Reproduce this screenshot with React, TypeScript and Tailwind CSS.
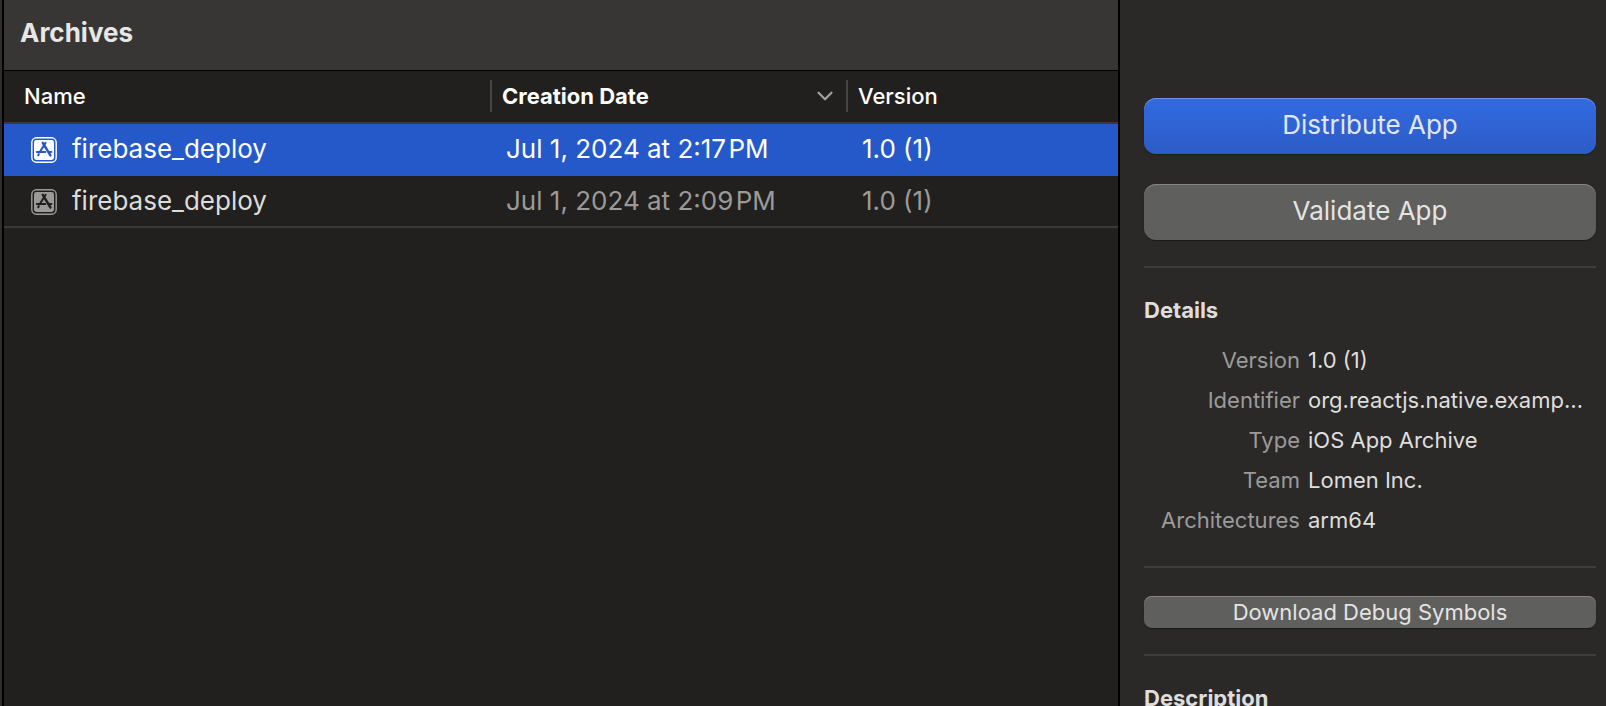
import { ChevronDown } from 'lucide-react'
import clsx from 'clsx'

interface Archive {
  id: number
  name: string
  date: string
  version: string
}

const ARCHIVES: Archive[] = [
  { id: 1, name: 'firebase_deploy', date: 'Jul 1, 2024 at 2:17\u200aPM', version: '1.0 (1)' },
  { id: 2, name: 'firebase_deploy', date: 'Jul 1, 2024 at 2:09\u200aPM', version: '1.0 (1)' },
]

const DETAILS = [
  { label: 'Version', value: '1.0 (1)' },
  { label: 'Identifier', value: 'org.reactjs.native.example.firebase-deploy' },
  { label: 'Type', value: 'iOS App Archive' },
  { label: 'Team', value: 'Lomen Inc.' },
  { label: 'Architectures', value: 'arm64' },
]

const SELECTED_ID = 1

function AppIcon({ selected }: { selected: boolean }) {
  return (
    <svg
      viewBox="0 0 26 26"
      aria-hidden="true"
      className={clsx('mt-0.5 size-[26px] shrink-0', selected ? 'text-white' : 'text-[#9b9a99]')}
    >
      <rect x="0.8" y="0.8" width="24.4" height="24.4" rx="4.6" fill="none" stroke="currentColor" strokeWidth="1.4" />
      <rect x="3" y="3" width="20" height="20" rx="2.4" fill="currentColor" />
      <g stroke={selected ? '#2558c9' : '#21201e'} strokeWidth="2.1" strokeLinecap="round" fill="none">
        <path d="M14.6 5.8 L9 14.8" />
        <path d="M11.8 5.8 L19.4 18.4" strokeWidth="2.5" />
        <path d="M5.8 15 H14.2" />
        <path d="M18.6 15 H20.4" />
        <path d="M7.8 17.2 L7.2 18.2" />
      </g>
    </svg>
  )
}

function Divider() {
  return <hr className="border-t-2 border-[#3e3d3c]" />
}

export default function App() {
  return (
    <div className="flex h-screen overflow-hidden border-l-2 border-[#2f2e2d] bg-[#21201e] font-['Inter','Liberation_Sans',sans-serif]">
      {/* Archive list */}
      <main className="min-w-0 flex-1 border-x-2 border-black">
        <header className="flex h-[71px] items-center border-b border-black bg-[#373634] px-4 pb-1">
          <h1 className="text-[26px] leading-8 font-bold text-[#e8e7e6]">Archives</h1>
        </header>

        <table className="w-full table-fixed border-separate border-spacing-0 text-left">
          <thead className="text-[22px] leading-8 text-white">
            <tr className="h-[53px]">
              <th scope="col" className="w-[486px] border-b-2 border-[#3a3938] p-0 pb-0.5 pl-5 font-medium">
                Name
              </th>
              <th scope="col" aria-sort="descending" className="w-[356px] border-b-2 border-[#3a3938] p-0 pb-0.5">
                <div className="flex items-center justify-between border-l-2 border-[#464544] pr-2 pl-2.5 font-bold">
                  Creation Date
                  <ChevronDown className="size-[26px] text-[#a3a2a1]" strokeWidth={2} />
                </div>
              </th>
              <th scope="col" className="border-b-2 border-[#3a3938] p-0 pb-0.5">
                <div className="border-l-2 border-[#464544] pl-2.5 font-medium">Version</div>
              </th>
            </tr>
          </thead>
          <tbody className="text-[26px] leading-8">
            {ARCHIVES.map((archive) => {
              const selected = archive.id === SELECTED_ID
              const cell = clsx(
                'p-0 border-b-2',
                selected ? 'border-[#2558c9] text-white' : 'border-[#3a3938] text-[#9b9a99]',
              )
              return (
                <tr key={archive.id} aria-selected={selected} className={clsx('h-[52px]', selected && 'bg-[#2558c9]')}>
                  <td className={cell}>
                    <div className="flex items-center gap-[15px] pl-[27px]">
                      <AppIcon selected={selected} />
                      <span className={selected ? 'text-white' : 'text-[#dddcdb]'}>{archive.name}</span>
                    </div>
                  </td>
                  <td className={clsx(cell, 'pl-4')}>{archive.date}</td>
                  <td className={clsx(cell, 'pl-4')}>{archive.version}</td>
                </tr>
              )
            })}
          </tbody>
        </table>
      </main>

      {/* Inspector */}
      <aside className="w-[486px] shrink-0 bg-[#2a2928] pt-[98px] pr-2.5 pl-6 text-[22px] leading-8 text-[#dfdedd]">
        <div className="flex flex-col gap-[30px] pb-[26px] text-[26px]">
          <button
            type="button"
            className="h-14 rounded-xl bg-linear-to-b from-[#336ae2] to-[#2c5cc6] pb-0.5 text-[#e0e7f8] shadow-[inset_0_1px_0_#6b93ea,0_1px_1px_#00000066]"
          >
            Distribute App
          </button>
          <button
            type="button"
            className="h-14 rounded-xl bg-[#5f5f5d] pb-0.5 text-[#e4e4e3] shadow-[inset_0_1px_0_#868584,0_1px_1px_#00000066]"
          >
            Validate App
          </button>
        </div>

        <Divider />

        <section className="py-[26px]">
          <h2 className="mb-3.5 font-bold">Details</h2>
          <dl className="grid grid-cols-[156px_1fr] gap-x-2 leading-10">
            {DETAILS.map(({ label, value }) => (
              <div key={label} className="contents">
                <dt className="text-right text-[#9c9b9a]">{label}</dt>
                <dd className="truncate pr-3">{value}</dd>
              </div>
            ))}
          </dl>
        </section>

        <Divider />

        <div className="pt-7 pb-[26px]">
          <button
            type="button"
            className="block h-8 w-full rounded-lg bg-[#5f5f5d] text-[#e4e4e3] shadow-[inset_0_1px_0_#868584,0_1px_1px_#00000066]"
          >
            Download Debug Symbols
          </button>
        </div>

        <Divider />

        <h2 className="pt-[26px] font-bold">Description</h2>
      </aside>
    </div>
  )
}
